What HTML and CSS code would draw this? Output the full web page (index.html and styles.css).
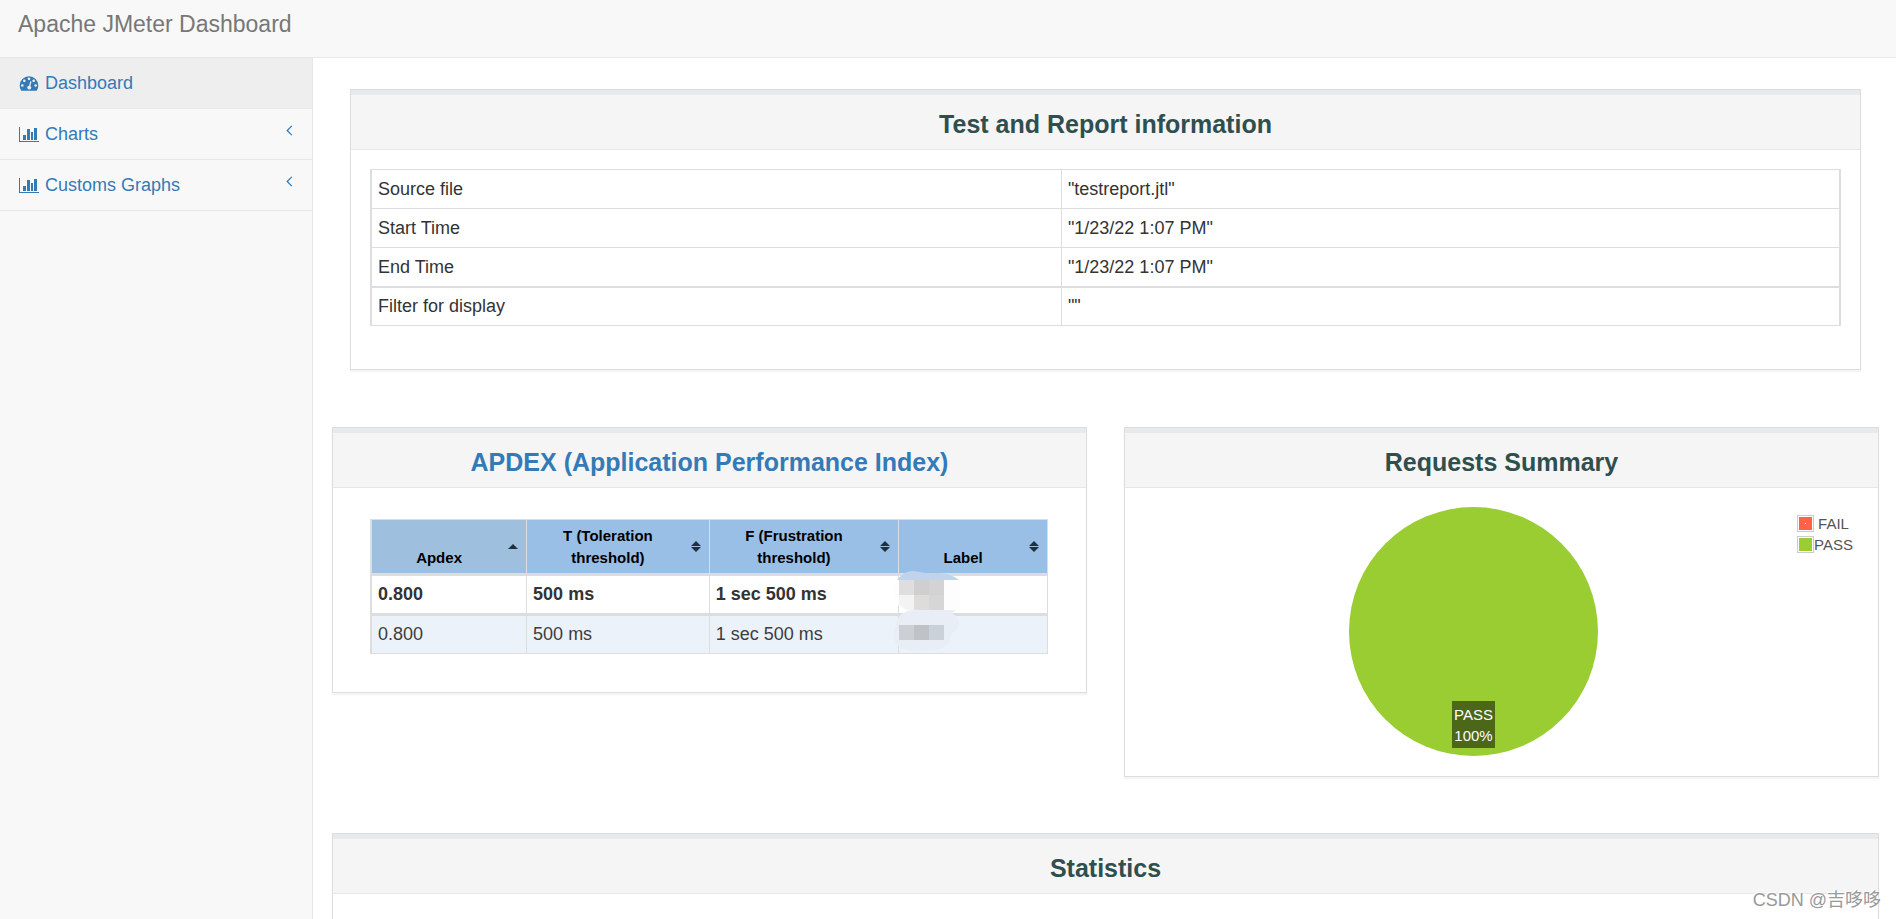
FILE: index.html
```html
<!DOCTYPE html>
<html lang="en">
<head>
<meta charset="utf-8">
<title>Apache JMeter Dashboard</title>
<link rel="stylesheet" href="styles.css">
</head>
<body>
<svg class="defs" aria-hidden="true">
  <symbol id="chevron" viewBox="0 0 7 12"><path d="M6 1 L1 6 L6 11" fill="none" stroke="currentColor" stroke-width="1.4"/></symbol>
  <symbol id="bars" viewBox="0 0 20 15"><path fill="currentColor" d="M0 0h1v14h19v1H0zM4 8h3v5H4zM8 2h3v11H8zM12 5h2v8h-2zM15 1h3v12h-3z"/></symbol>
  <symbol id="sort" viewBox="0 0 10 12"><path d="M5 0 L10 5 H0z M0 6 H10 L5 11z" fill="#223038"/></symbol>
  <symbol id="sorted" viewBox="0 0 10 12"><path d="M5 3 L10 8 H0z" fill="#223038"/></symbol>
</svg>
<header class="navbar"><a class="brand" href="#">Apache JMeter Dashboard</a></header>
<div class="layout">
  <nav class="sidebar">
    <ul class="menu">
      <li><a class="menu-link active" href="#">
        <svg class="menu-icon" viewBox="-64 0 1920 1408"><path fill="currentColor" fill-rule="evenodd" d="M896 0a896 896 0 0 1 896 896q0 261-141 483-19 29-54 29H195q-35 0-54-29Q0 1158 0 896A896 896 0 0 1 896 0zM256 768a128 128 0 1 0 0 256 128 128 0 0 0 0-256zM448 320a128 128 0 1 0 0 256 128 128 0 0 0 0-256zM896 128a128 128 0 1 0 0 256 128 128 0 0 0 0-256zM1344 320a128 128 0 1 0 0 256 128 128 0 0 0 0-256zM1536 768a128 128 0 1 0 0 256 128 128 0 0 0 0-256zM1083 480q-25-6-48 7t-29 39l-101 382q-60 5-107 43t-63 98q-20 77 20 146t117 89 146-20 89-117q16-60-6-117t-72-91l101-382q6-26-7-48t-40-29z"/></svg>
        <span>Dashboard</span></a></li>
      <li><a class="menu-link" href="#"><svg class="menu-icon wide"><use href="#bars"/></svg><span>Charts</span><svg class="arrow"><use href="#chevron"/></svg></a></li>
      <li><a class="menu-link" href="#"><svg class="menu-icon wide"><use href="#bars"/></svg><span>Customs Graphs</span><svg class="arrow"><use href="#chevron"/></svg></a></li>
    </ul>
  </nav>
  <main class="content">
    <section class="panel panel-info">
      <h2 class="panel-title">Test and Report information</h2>
      <div class="panel-body">
        <table class="info">
          <tbody>
            <tr><td>Source file</td><td>"testreport.jtl"</td></tr>
            <tr><td>Start Time</td><td>"1/23/22 1:07 PM"</td></tr>
            <tr><td>End Time</td><td>"1/23/22 1:07 PM"</td></tr>
            <tr class="last"><td>Filter for display</td><td>""</td></tr>
          </tbody>
        </table>
      </div>
    </section>
    <div class="columns">
      <section class="panel">
        <h2 class="panel-title"><a href="#">APDEX (Application Performance Index)</a></h2>
        <div class="panel-body apdex-body">
          <table class="apdex">
            <colgroup><col class="c1"><col class="c2"><col class="c3"><col class="c4"></colgroup>
            <thead>
              <tr>
                <th class="sorted"><div>Apdex</div><svg class="sort"><use href="#sorted"/></svg></th>
                <th><div>T (Toleration<br>threshold)</div><svg class="sort"><use href="#sort"/></svg></th>
                <th><div>F (Frustration<br>threshold)</div><svg class="sort"><use href="#sort"/></svg></th>
                <th><div>Label</div><svg class="sort"><use href="#sort"/></svg></th>
              </tr>
            </thead>
            <tbody>
              <tr class="total"><td>0.800</td><td>500 ms</td><td>1 sec 500 ms</td><td class="masked">
                <svg class="mask" viewBox="0 0 70 84">
                  <path fill="#fdfdfd" d="M4 10H66V36Q64 41 58 42H14Q0 38 0 22Q0 14 4 10z"/>
                  <path fill="#bfd4eb" d="M3 11Q10 2 19 2L32 4H46Q58 5 65 11z"/>
                  <path fill="#dedede" d="M5 11H20V26H5z"/><path fill="#cfcfcf" d="M20 11H35V26H20z"/><path fill="#d3d3d3" d="M35 11H50V26H35z"/>
                  <path fill="#f3f3f3" d="M5 26H20V41H14Q8 39 5 35z"/><path fill="#dddcda" d="M20 26H35V41H20z"/><path fill="#d6d6d6" d="M35 26H50V41H35z"/>
                  <path fill="#e9edf5" d="M2 56Q4 44 14 42Q20 40 30 41H62L58 44Q65 48 65 55Q64 60 58 64Q56 78 46 80L30 82H18Q0 80 0 66z"/>
                  <path fill="#cccfd3" d="M5 56H20V71H5z"/><path fill="#bfc3c8" d="M20 56H35V71H20z"/><path fill="#cad1d9" d="M35 56H50V71H35z"/>
                </svg></td></tr>
              <tr class="item"><td>0.800</td><td>500 ms</td><td>1 sec 500 ms</td><td></td></tr>
            </tbody>
          </table>
        </div>
      </section>
      <section class="panel">
        <h2 class="panel-title">Requests Summary</h2>
        <div class="panel-body chart">
          <div class="pie"><div class="pie-label">PASS<br>100%</div></div>
          <ul class="legend">
            <li><span class="swatch fail"></span><span class="fail-text">FAIL</span></li>
            <li><span class="swatch pass"></span><span>PASS</span></li>
          </ul>
        </div>
      </section>
    </div>
    <section class="panel">
      <h2 class="panel-title">Statistics</h2>
      <div class="panel-body statistics"></div>
    </section>
  </main>
</div>
<div class="watermark">CSDN @吉哆哆</div>
</body>
</html>
```
FILE: styles.css
```css
* { box-sizing: border-box; }
html, body { height: 100%; }
body {
  margin: 0;
  display: flex;
  flex-direction: column;
  overflow: hidden;
  background: #f8f8f8;
  color: #333;
  font: 18px/25px "Liberation Sans", Arial, sans-serif;
}
a { color: #337ab7; text-decoration: none; }
ul { list-style: none; margin: 0; padding: 0; }
.defs { position: absolute; width: 0; height: 0; }

.navbar {
  flex: none;
  padding: 12px 18px 20px;
  border-bottom: 1px solid #e7e7e7;
}
.brand { display: block; color: #777; font-size: 23px; }

.layout { flex: 1; min-height: 0; display: flex; }
.sidebar { flex: none; width: 312px; }
.menu-link {
  display: flex;
  align-items: center;
  gap: 6px;
  padding: 13px 19px 12px;
  border-bottom: 1px solid #e7e7e7;
}
.menu-link.active { background: #eee; }
.menu-icon { width: 20px; height: 15px; }
.arrow { width: 7px; height: 11px; margin: 0 0 8px auto; }

.content {
  flex: 1;
  min-width: 0;
  padding: 31px 17px 0 19px;
  background: #fff;
  border-left: 1px solid #e7e7e7;
  overflow: hidden;
}
.panel {
  background: #fff;
  border: 1px solid #ddd;
  box-shadow: 0 2px 1px #f4f4f4;
}
.panel-info { margin: 0 18px 57px 18px; }
.panel-title {
  margin: 0;
  padding: 16px 19px 11px;
  border-top: 5px solid #e6eaed;
  border-bottom: 1px solid #e7e7e7;
  background: #f5f5f5;
  color: #2f4f4f;
  font-size: 25px;
  line-height: 27px;
  text-align: center;
}
.panel-body { padding: 19px; }

table { width: 100%; border-collapse: collapse; }
td { border: 1px solid #ddd; padding: 6px; }
.info { border: 2px solid #ddd; border-top-width: 1px; border-bottom-width: 1px; margin-bottom: 24px; }
.info td { padding-top: 7px; }
.info td:first-child { width: 47%; }
.info .last td { border-top-width: 2px; padding-top: 6px; }

.columns {
  display: grid;
  grid-template-columns: 1fr 1fr;
  align-items: start;
  gap: 37px;
  margin-bottom: 56px;
}
.apdex-body { padding: 31px 38px 38px 37px; }
.apdex { table-layout: fixed; border-left: 2px solid #ddd; }
.c1 { width: 23%; }
.c2 { width: 27%; }
.c3 { width: 28%; }
.c4 { width: 22%; }
.apdex th {
  position: relative;
  padding: 5px 25px 4px 5px;
  border: 1px solid #ddd;
  border-bottom-width: 3px;
  background: #99bfe6;
  color: #000;
  font-size: 15px;
  line-height: 22px;
  vertical-align: bottom;
}
.apdex .sorted { background: #9fbfdf; }
.sort { position: absolute; right: 8px; top: 21px; width: 10px; height: 12px; }
.apdex .total td { border-bottom-width: 3px; font-weight: bold; }
.apdex .item td { background: #ebf2fa; color: #3d3d3d; }
.apdex .masked { position: relative; }
.mask { position: absolute; left: -5px; top: -7px; width: 70px; height: 84px; }

.chart { position: relative; }
.pie {
  display: flex;
  align-items: flex-end;
  justify-content: center;
  width: 249px;
  height: 249px;
  margin: 0 0 1px 205px;
  padding-bottom: 8px;
  border-radius: 50%;
  background: #9acd32;
}
.pie-label {
  padding: 3px 2px 2px;
  background: #4d6719;
  color: #fff;
  font-size: 15px;
  line-height: 21px;
  text-align: center;
}
.legend {
  position: absolute;
  top: 25px;
  right: 25px;
  color: #545454;
  font-size: 15px;
  line-height: 21px;
}
.legend li { display: flex; align-items: center; }
.swatch {
  width: 17px;
  height: 17px;
  padding: 1px;
  border: 1px solid #ccc;
  background-clip: content-box;
}
.fail { background-color: #ff6347; }
.fail::after {
  content: "";
  display: block;
  width: 1px;
  height: 1px;
  margin: 6px;
  background: #fff;
}
.pass { background-color: #9acd32; }
.fail-text { padding-left: 4px; }
.statistics { min-height: 200px; }

.watermark {
  position: absolute;
  right: 15px;
  bottom: 6px;
  color: #999;
  font: 18px/26px "Liberation Sans", "Noto Sans CJK SC", sans-serif;
  text-shadow: -1px -1px 0 #fff;
}
```
